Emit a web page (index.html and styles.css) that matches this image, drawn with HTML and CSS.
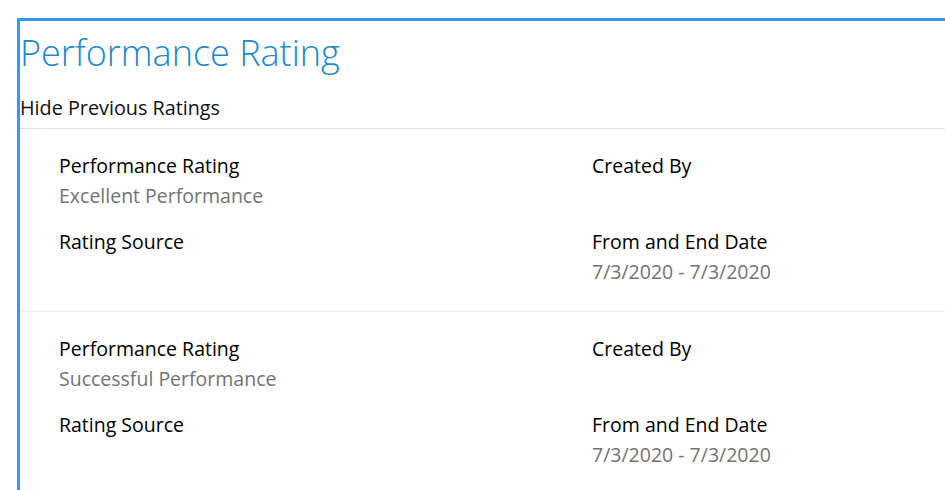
FILE: index.html
```html
<!DOCTYPE html>
<html>
<head>
<meta charset="utf-8">
<link rel="stylesheet" href="styles.css">
</head>
<body>
<div class="panel">
  <h1 class="title">Performance Rating</h1>
  <div class="toggle">Hide Previous Ratings</div>
  <div class="ratings">
    <div class="rating">
      <div class="field"><div class="label">Performance Rating</div><div class="value">Excellent Performance</div></div>
      <div class="field"><div class="label">Created By</div><div class="value"></div></div>
      <div class="field"><div class="label">Rating Source</div><div class="value"></div></div>
      <div class="field"><div class="label">From and End Date</div><div class="value">7/3/2020 - 7/3/2020</div></div>
    </div>
    <div class="rating">
      <div class="field"><div class="label">Performance Rating</div><div class="value">Successful Performance</div></div>
      <div class="field"><div class="label">Created By</div><div class="value"></div></div>
      <div class="field"><div class="label">Rating Source</div><div class="value"></div></div>
      <div class="field"><div class="label">From and End Date</div><div class="value">7/3/2020 - 7/3/2020</div></div>
    </div>
  </div>
</div>
</body>
</html>
```
FILE: styles.css
```css
html, body {
  margin: 0;
  padding: 0;
  background: #ffffff;
  overflow: hidden;
}
body {
  font-family: "Open Sans", "Noto Sans", sans-serif;
  color: #000000;
}
.panel {
  margin: 18px 0 0 17px;
  border-top: 3px solid #3399ff;
  border-left: 3px solid #3399ff;
  height: 469px;
  overflow: hidden;
}
.title {
  margin: 0;
  font-weight: 300;
  font-size: 36px;
  line-height: 46px;
  color: #1e88c8;
  padding-top: 9px;
}
.toggle {
  font-size: 19.8px;
  line-height: 26px;
  padding-top: 19px;
  padding-bottom: 7px;
  color: #111;
  border-bottom: 1px solid #d8e2ea;
}
.rating {
  display: grid;
  grid-template-columns: 533px 1fr;
  row-gap: 16px;
  padding: 22px 0 24px 39px;
  border-bottom: 1px solid #eaeaea;
}
.label, .value {
  font-size: 19.5px;
  line-height: 30px;
  height: 30px;
  white-space: nowrap;
}
.value {
  color: #737373;
}
```
